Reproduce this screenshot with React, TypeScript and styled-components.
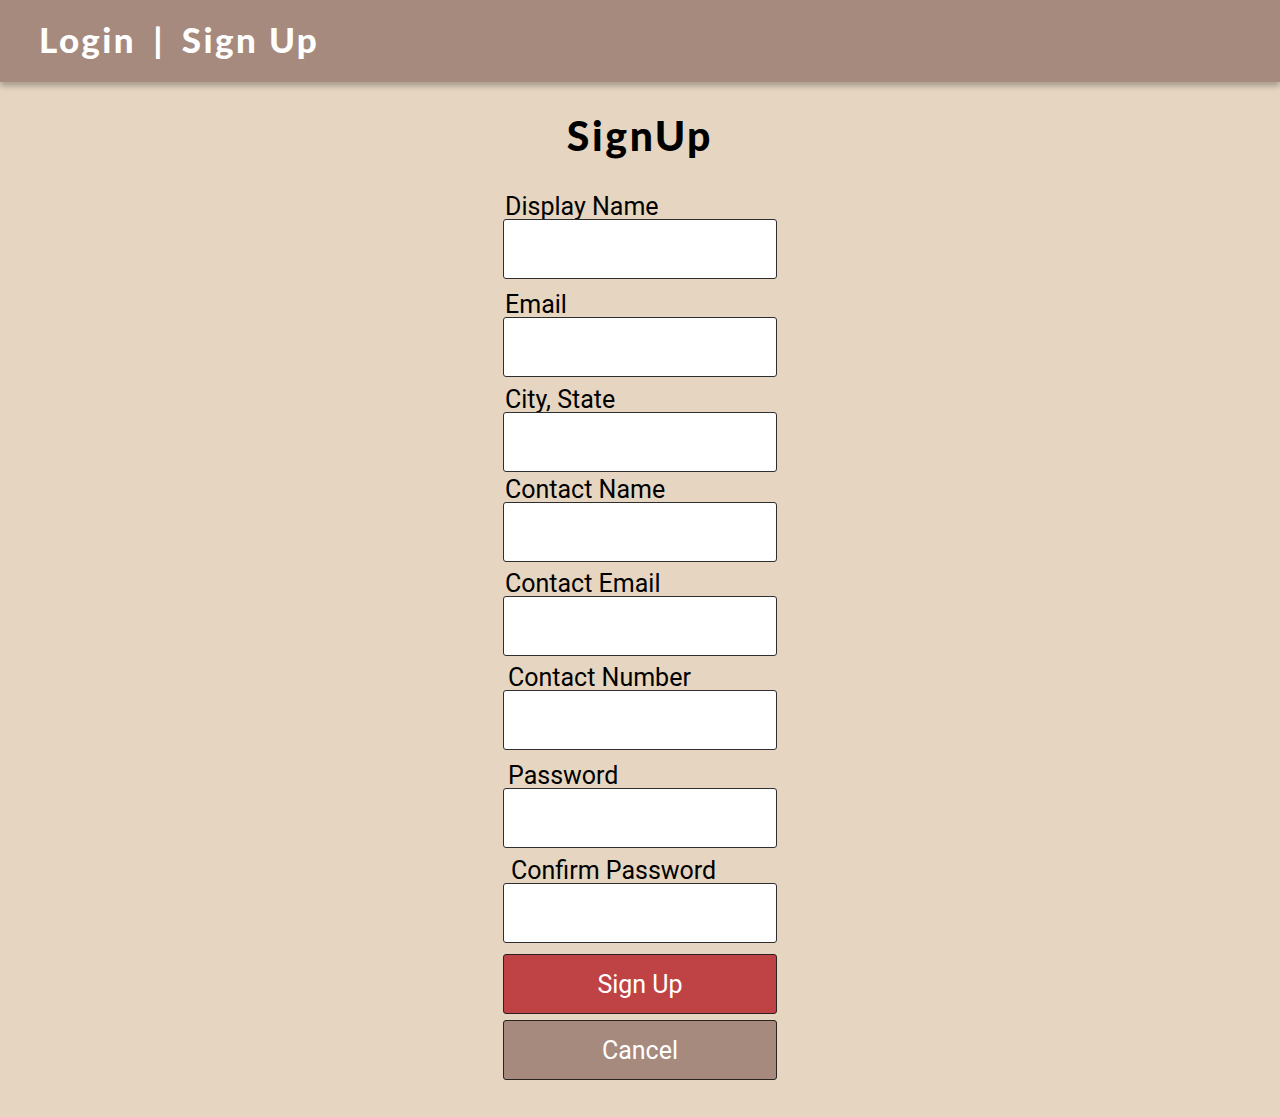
import React from "react";
import styled, { createGlobalStyle } from "styled-components";

const Global = createGlobalStyle`
  html, body { margin: 0; padding: 0; background: #e6d6c1; }
  body { font-family: Roboto, "Liberation Sans", sans-serif; min-height: 1117px; }
  * { box-sizing: border-box; }
`;

const Header = styled.header`
  height: 82px;
  background: #a68a7e;
  display: flex;
  align-items: center;
  padding-left: 39px;
  padding-bottom: 4px;
  box-shadow: 0 4px 6px rgba(0, 0, 0, 0.28);
  position: relative;
  z-index: 1;
`;

const NavText = styled.div`
  font-family: Lato, "Open Sans", sans-serif;
  font-weight: 900;
  font-size: 35px;
  color: #ffffff;
  display: flex;
  gap: 17px;
  letter-spacing: 2.4px;
`;

const Main = styled.main`
  display: flex;
  flex-direction: column;
  align-items: center;
  padding-bottom: 36px;
`;

const Title = styled.h1`
  font-family: Lato, "Open Sans", sans-serif;
  font-weight: 900;
  font-size: 41px;
  line-height: 48px;
  letter-spacing: 2.6px;
  margin: 30px 0 0;
  color: #000;
`;

const Form = styled.form`
  width: 274px;
  display: flex;
  flex-direction: column;
  margin-top: 35px;
`;

const Field = styled.div<{ $gap: number }>`
  display: flex;
  flex-direction: column;
  margin-top: ${(p) => p.$gap}px;
`;

const Label = styled.label<{ $indent: number }>`
  font-size: 25px;
  line-height: 24px;
  height: 24px;
  color: #000;
  padding-left: ${(p) => p.$indent}px;
  white-space: pre;
`;

const Input = styled.input`
  height: 60px;
  width: 274px;
  border: 1px solid #2e2e2e;
  border-radius: 3px;
  background: #fff;
  font-size: 20px;
  padding: 0 8px;
`;

const Button = styled.button<{ $bg: string; $gap: number }>`
  height: 60px;
  width: 274px;
  margin-top: ${(p) => p.$gap}px;
  background: ${(p) => p.$bg};
  border: 1px solid #2a2220;
  border-radius: 3px;
  color: #fff;
  font-family: Roboto, "Liberation Sans", sans-serif;
  font-size: 25px;
  cursor: pointer;
`;

const fields: { label: string; gap: number; indent: number; type?: string }[] = [
  { label: "Display Name", gap: 0, indent: 2 },
  { label: "Email", gap: 14, indent: 2 },
  { label: "City, State", gap: 11, indent: 2 },
  { label: "Contact Name", gap: 6, indent: 2 },
  { label: "Contact Email", gap: 10, indent: 2 },
  { label: "Contact Number", gap: 10, indent: 5 },
  { label: "Password", gap: 14, indent: 5, type: "password" },
  { label: "Confirm Password", gap: 11, indent: 8, type: "password" },
];

export default function App() {
  return (
    <>
      <Global />
      <Header>
        <NavText>
          <span>Login</span>
          <span>|</span>
          <span>Sign Up</span>
        </NavText>
      </Header>
      <Main>
        <Title>SignUp</Title>
        <Form onSubmit={(e) => e.preventDefault()}>
          {fields.map((f) => (
            <Field key={f.label} $gap={f.gap}>
              <Label $indent={f.indent}>{f.label}</Label>
              <Input type={f.type ?? "text"} />
            </Field>
          ))}
          <Button type="submit" $bg="#bf4344" $gap={11}>Sign Up</Button>
          <Button type="button" $bg="#a68a7e" $gap={6}>Cancel</Button>
        </Form>
      </Main>
    </>
  );
}
